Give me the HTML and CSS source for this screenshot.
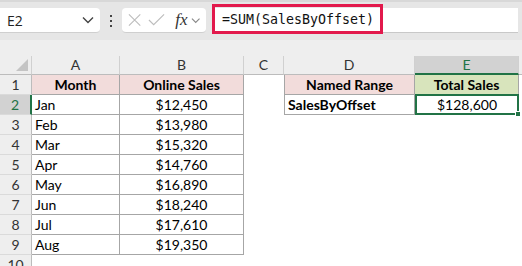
FILE: index.html
```html
<!DOCTYPE html>
<html>
<head>
    <title>SalesByOffset</title>
    <meta name="viewport" content="width=device-width, initial-scale=1">
    <link rel="stylesheet" href="styles.css">
</head>
<body>
  <div class="toolbar">
    <div class="namebox">
      <span>E2</span>
      <svg width="12" height="8" viewBox="0 0 12 8"><path d="M1 1.5 L6 6.5 L11 1.5" fill="none" stroke="#444" stroke-width="1.4"/></svg>
    </div>
    <div class="dots"><i></i><i></i><i></i></div>
    <div class="fxbox">
      <svg width="14" height="14" viewBox="0 0 14 14"><path d="M1 1 L13 13 M13 1 L1 13" stroke="#bdbdbd" stroke-width="1.2"/></svg>
      <svg width="18" height="14" viewBox="0 0 18 14"><path d="M1 7 L6 12 L17 1" fill="none" stroke="#bdbdbd" stroke-width="1.2"/></svg>
      <span class="fx">fx</span>
      <svg width="10" height="7" viewBox="0 0 10 7"><path d="M1 1.5 L5 5.5 L9 1.5" fill="none" stroke="#888" stroke-width="1.2"/></svg>
    </div>
    <div class="formula">
      <span class="hl">=SUM(SalesByOffset)</span>
    </div>
  </div>
  <div class="band"></div>
  <div class="sheet">
    <div class="ch corner"><span class="tri"></span></div>
    <div class="ch">A</div>
    <div class="ch">B</div>
    <div class="ch">C</div>
    <div class="ch">D</div>
    <div class="ch sel">E</div>
    <div class="ch rest"></div>

    <div class="rh">1</div>
    <div class="c t head pink">Month</div>
    <div class="c t head pink">Online Sales</div>
    <div class="c"></div>
    <div class="c t dl head pink">Named Range</div>
    <div class="c t head green">Total Sales</div>
    <div class="c"></div>

    <div class="rh sel">2</div>
    <div class="c t">Jan</div>
    <div class="c t num">$12,450</div>
    <div class="c"></div>
    <div class="c t dl bold">SalesByOffset</div>
    <div class="c t num active">$128,600<span class="handle"></span></div>
    <div class="c"></div>

    <div class="rh">3</div>
    <div class="c t">Feb</div>
    <div class="c t num">$13,980</div>
    <div class="c wide"></div>

    <div class="rh">4</div>
    <div class="c t">Mar</div>
    <div class="c t num">$15,320</div>
    <div class="c wide"></div>

    <div class="rh">5</div>
    <div class="c t">Apr</div>
    <div class="c t num">$14,760</div>
    <div class="c wide"></div>

    <div class="rh">6</div>
    <div class="c t">May</div>
    <div class="c t num">$16,890</div>
    <div class="c wide"></div>

    <div class="rh">7</div>
    <div class="c t">Jun</div>
    <div class="c t num">$18,240</div>
    <div class="c wide"></div>

    <div class="rh">8</div>
    <div class="c t">Jul</div>
    <div class="c t num">$17,610</div>
    <div class="c wide"></div>

    <div class="rh">9</div>
    <div class="c t">Aug</div>
    <div class="c t num">$19,350</div>
    <div class="c wide"></div>

    <div class="rh">10</div>
    <div class="c full"></div>
  </div>
</body>
</html>
```

FILE: styles.css
```css
* {
  -webkit-box-sizing: border-box;
  -moz-box-sizing: border-box;
  box-sizing: border-box;
}

body {
  margin: 0;
  width: 522px;
  height: 266px;
  overflow: hidden;
  background: #fff;
  font-family: "Lato", "Liberation Sans", sans-serif;
}

.toolbar {
  height: 40px;
  background: #e6e6e6;
  border-top: 2px solid #d8d8d8;
  display: flex;
  align-items: flex-start;
  padding-top: 6px;
}

.namebox {
  width: 100px;
  height: 25px;
  background: #fff;
  border-radius: 0 4px 4px 0;
  border-bottom: 1px solid #cfcfcf;
  display: flex;
  align-items: center;
  justify-content: space-between;
  padding: 0 6px 0 7px;
  font-family: "Open Sans", "Noto Sans", sans-serif;
  font-size: 14px;
  color: #222;
}

.dots {
  width: 22px;
  height: 25px;
  display: flex;
  flex-direction: column;
  align-items: center;
  justify-content: center;
  gap: 3px;
}
.dots i {
  width: 2px;
  height: 2px;
  background: #444;
}

.fxbox {
  width: 84px;
  height: 25px;
  background: #fff;
  border-radius: 4px;
  border-bottom: 1px solid #cfcfcf;
  display: flex;
  align-items: center;
  padding: 0 6px 0 6px;
  gap: 7px;
}
.fx {
  font-family: "Liberation Serif", serif;
  font-style: italic;
  font-size: 17px;
  color: #333;
  margin-left: 3px;
  margin-right: -4px;
}

.formula {
  margin-left: 6px;
  width: 306px;
  height: 25px;
  background: #fff;
  border-bottom: 1px solid #c8c8c8;
  display: flex;
  align-items: flex-start;
}
.formula .hl {
  margin-top: -4px;
  height: 30px;
  width: 171px;
  border: 3px solid #e2194c;
  padding-left: 7px;
  display: flex;
  align-items: center;
  font-family: "DejaVu Sans Mono", monospace;
  font-size: 13.3px;
  color: #111;
}

.band {
  height: 16px;
  background: #eeeeee;
}

.sheet {
  display: grid;
  grid-template-columns: 32px 88px 124px 40px 131px 104px 1fr;
  grid-template-rows: 19px;
  grid-auto-rows: 20px;
  font-size: 14px;
  color: #000;
}

.ch {
  background: #eeeeee;
  border-right: 1px solid #d0d0d0;
  border-bottom: 1px solid #bcbcbc;
  color: #333;
  text-align: center;
  line-height: 18px;
  font-size: 14px;
}
.ch.sel {
  background: #d2d2d2;
  color: #217346;
  border-bottom: 2px solid #217346;
}
.ch.rest {
  border-right: none;
}
.corner {
  position: relative;
}
.tri {
  position: absolute;
  right: 3px;
  bottom: 3px;
  width: 0;
  height: 0;
  border-left: 12px solid transparent;
  border-bottom: 12px solid #c4c4c4;
}

.rh {
  background: #eeeeee;
  border-right: 1px solid #bcbcbc;
  border-bottom: 1px solid #dadada;
  color: #333;
  text-align: center;
  line-height: 19px;
}
.rh.sel {
  background: #d2d2d2;
  color: #217346;
  border-right: 2px solid #217346;
}

.c {
  line-height: 19px;
  white-space: nowrap;
}
.c.t {
  border-right: 1px solid #a6a6a6;
  border-bottom: 1px solid #a6a6a6;
  padding-left: 3px;
}
.c.dl {
  border-left: 1px solid #a6a6a6;
}
.c.num {
  text-align: center;
  padding-left: 0;
}
.c.head {
  font-weight: bold;
  text-align: center;
  padding-left: 0;
}
.c.bold {
  font-weight: bold;
}
.pink {
  background: #f2dcdb;
}
.green {
  background: #d8e4bc;
}
.c.active {
  position: relative;
  border: 2px solid #217346;
  margin-top: -1px;
  line-height: 17px;
}
.handle {
  position: absolute;
  right: -4px;
  bottom: -4px;
  width: 6px;
  height: 6px;
  background: #217346;
  border: 1px solid #fff;
}
.c.wide {
  grid-column: 4 / 8;
}
.c.full {
  grid-column: 2 / 8;
}
```
